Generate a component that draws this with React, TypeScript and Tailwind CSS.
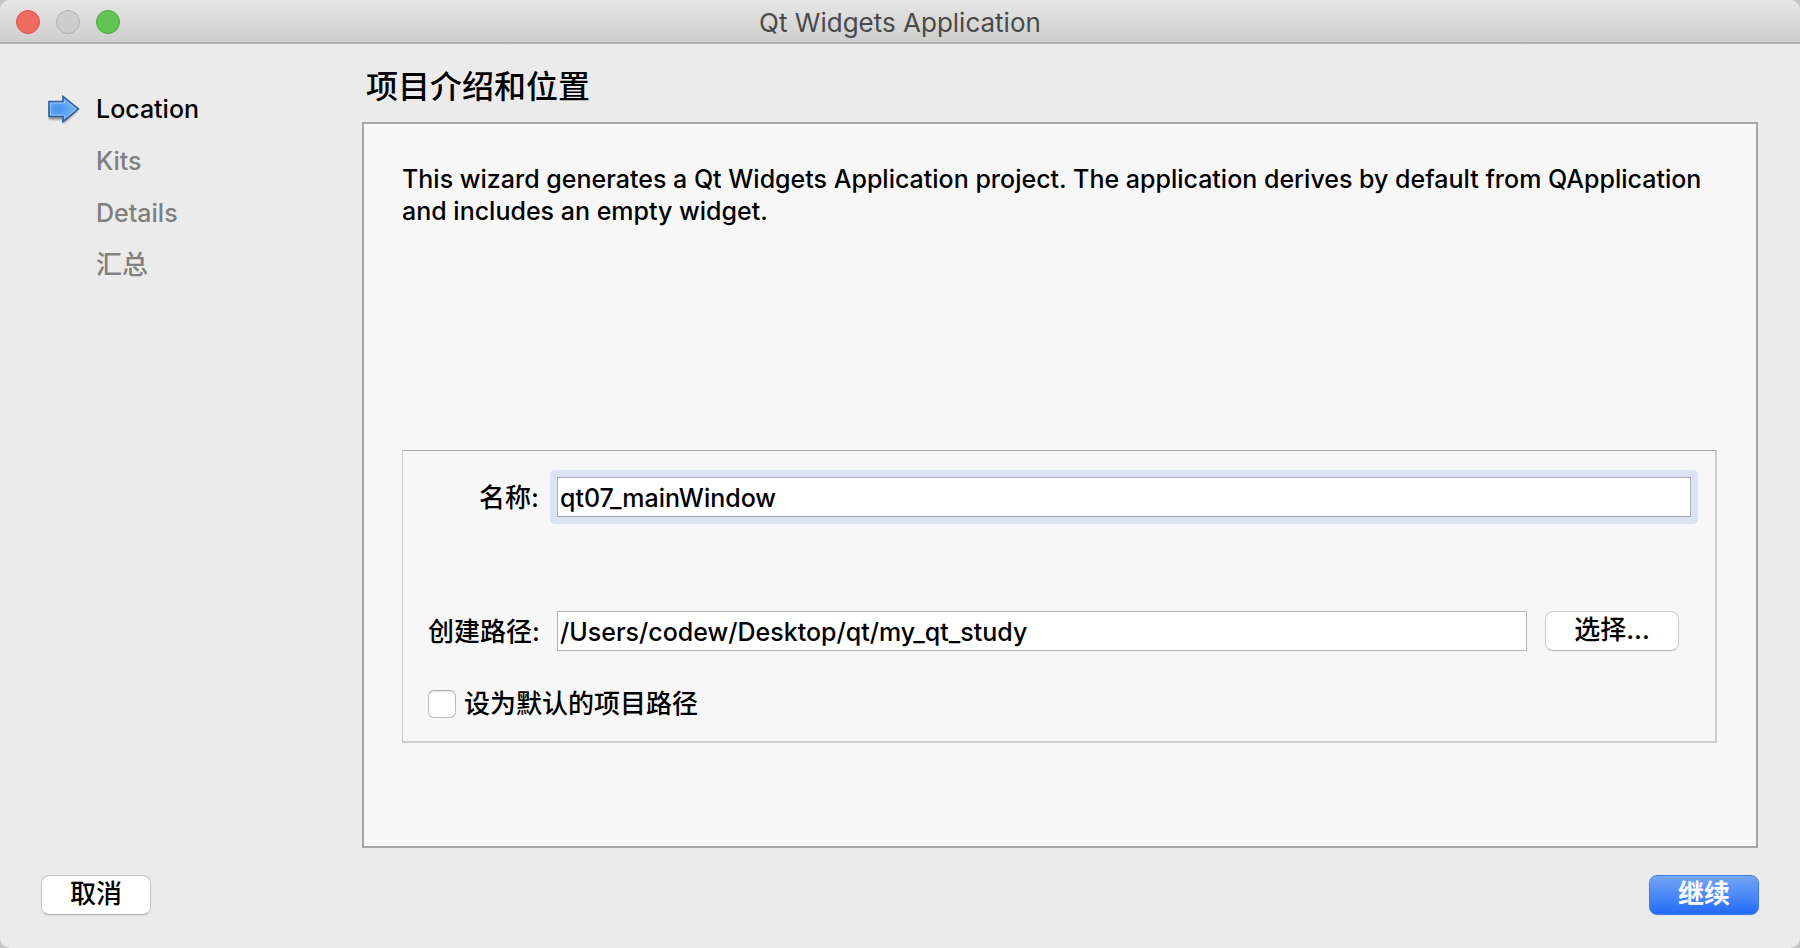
import { useState } from "react";

type Step = { label: string; current?: boolean; chinese?: boolean };

const steps: Step[] = [
  { label: "Location", current: true },
  { label: "Kits" },
  { label: "Details" },
  { label: "汇总", chinese: true },
];

function StepArrow() {
  return (
    <svg className="h-8 w-8" viewBox="0 0 32 32" aria-hidden="true">
      <defs>
        <radialGradient id="arrowFill" cx="0.3" cy="0.5" r="0.75">
          <stop offset="0" stopColor="#4496f0" />
          <stop offset="1" stopColor="#86b8f7" />
        </radialGradient>
        <filter id="arrowShadow" x="-20%" y="-20%" width="140%" height="150%">
          <feGaussianBlur stdDeviation="1.2" />
        </filter>
      </defs>
      <path
        d="M1 10.5H15V6L29.5 18L15.5 31V26.5H1Z"
        fill="#000"
        opacity="0.4"
        filter="url(#arrowShadow)"
      />
      <path
        d="M1 8.5H15V3.5L30.5 16L15 28.5V23.5H1Z"
        fill="url(#arrowFill)"
        stroke="#2f5f98"
        strokeWidth="1.6"
      />
      <path
        d="M2.6 10.1H16.6V6.8L28 16L16.6 25.2V21.9H2.6Z"
        fill="none"
        stroke="#8fc0fa"
        strokeWidth="1"
      />
    </svg>
  );
}

function TitleBar() {
  return (
    <header className="grid h-11 grid-cols-[1fr_auto_1fr] items-center border-b-2 border-[#b1b1b1] bg-linear-to-b from-[#e6e6e6] to-[#cecece] px-4 pt-0.5">
      <div className="flex gap-4">
        <button
          type="button"
          aria-label="Close"
          className="size-6 rounded-full border border-[#d8544a] bg-[#ee6b60]"
        />
        <button
          type="button"
          aria-label="Minimize"
          disabled
          className="size-6 rounded-full border border-[#b0b0b0] bg-[#cdcdcd]"
        />
        <button
          type="button"
          aria-label="Zoom"
          className="size-6 rounded-full border border-[#4aa73c] bg-[#61c554]"
        />
      </div>
      <h1 className="pt-px text-[26px] leading-8 text-[#4a4a4a]">Qt Widgets Application</h1>
    </header>
  );
}

function Steps() {
  return (
    <nav className="w-[362px] shrink-0 pt-[39px]">
      <ol>
        {steps.map((step) => (
          <li
            key={step.label}
            aria-current={step.current ? "step" : undefined}
            className={
              step.current
                ? "flex h-[52px] items-center gap-4 pl-12 text-black"
                : "flex h-[52px] items-center pl-24 text-[#808080]"
            }
          >
            {step.current && <StepArrow />}
            <span className={step.chinese ? "font-medium" : "text-[25px] font-medium"}>
              {step.label}
            </span>
          </li>
        ))}
      </ol>
    </nav>
  );
}

export default function App() {
  const [name, setName] = useState("qt07_mainWindow");
  const [path, setPath] = useState("/Users/codew/Desktop/qt/my_qt_study");
  const [isDefault, setIsDefault] = useState(false);

  return (
    <div className="min-h-screen bg-[#c4c4c4] font-['Inter','Noto_Sans_CJK_SC',sans-serif] text-[26px] leading-8 text-black">
      <div className="flex min-h-screen flex-col overflow-hidden rounded-[10px] bg-[#ebebeb]">
        <TitleBar />
        <div className="flex flex-1">
          <Steps />
          <main className="mr-[42px] flex flex-1 flex-col">
            <h2 className="flex h-[78px] items-center pt-2 pl-1 text-[32px] leading-10 font-medium">
              项目介绍和位置
            </h2>
            <section className="flex flex-1 flex-col justify-between border-2 border-[#a7a7a7] bg-[#f7f7f7] pt-[39px] pr-[39px] pb-[103px] pl-[38px]">
              <p className="text-[25px] font-medium">
                This wizard generates a Qt Widgets Application project. The application derives by
                default from QApplication and includes an empty widget.
              </p>
              <form
                className="border border-t-[#a6a6a6] border-r-2 border-b-2 border-[#cdcdcd] pt-[26px] pr-6 pb-[21px] pl-[25px]"
                onSubmit={(e) => e.preventDefault()}
              >
                <div className="grid grid-cols-[111px_1fr] items-center gap-x-[18px] gap-y-[94px]">
                  <label htmlFor="name" className="pt-0.5 text-right font-medium">
                    名称:
                  </label>
                  <div className="-m-[7px] flex rounded-[5px] bg-[#dce4f4] p-[7px]">
                    <input
                      id="name"
                      type="text"
                      value={name}
                      onChange={(e) => setName(e.target.value)}
                      className="h-10 min-w-0 flex-1 border border-[#a3aabb] bg-white px-0.5 pt-px text-[25px] font-medium outline-none"
                    />
                  </div>
                  <label htmlFor="path" className="pt-0.5 text-right font-medium whitespace-nowrap">
                    创建路径:
                  </label>
                  <div className="flex items-center gap-[18px] pr-3">
                    <input
                      id="path"
                      type="text"
                      value={path}
                      onChange={(e) => setPath(e.target.value)}
                      className="h-10 min-w-0 flex-1 border border-[#b4b4b4] bg-white px-0.5 pt-px text-[25px] font-medium"
                    />
                    <button
                      type="button"
                      className="h-10 w-[134px] rounded-lg border border-[#cfcfcf] border-b-[#b4b4b4] bg-white pb-0.5 font-medium shadow-xs"
                    >
                      选择...
                    </button>
                  </div>
                </div>
                <div className="mt-[37px] flex items-center gap-2">
                  <input
                    id="default-path"
                    type="checkbox"
                    checked={isDefault}
                    onChange={(e) => setIsDefault(e.target.checked)}
                    className="size-7 appearance-none rounded-md border border-[#bcbcbc] border-t-[#a8a8a8] bg-white shadow-[inset_0_1px_2px_rgba(0,0,0,0.12)] checked:bg-[#2a6ff7]"
                  />
                  <label htmlFor="default-path" className="font-medium">
                    设为默认的项目路径
                  </label>
                </div>
              </form>
            </section>
          </main>
        </div>
        <footer className="flex justify-between pt-[27px] pr-[41px] pb-[33px] pl-[41px]">
          <button
            type="button"
            className="h-10 w-[110px] rounded-lg border border-[#c4c4c4] border-b-[#aeaeae] bg-white pb-0.5 font-medium shadow-xs"
          >
            取消
          </button>
          <button
            type="button"
            className="h-10 w-[110px] rounded-lg border border-[#3f7ff0] bg-linear-to-b from-[#74a5f6] to-[#2369f8] pb-0.5 font-bold text-white shadow-xs"
          >
            继续
          </button>
        </footer>
      </div>
    </div>
  );
}
